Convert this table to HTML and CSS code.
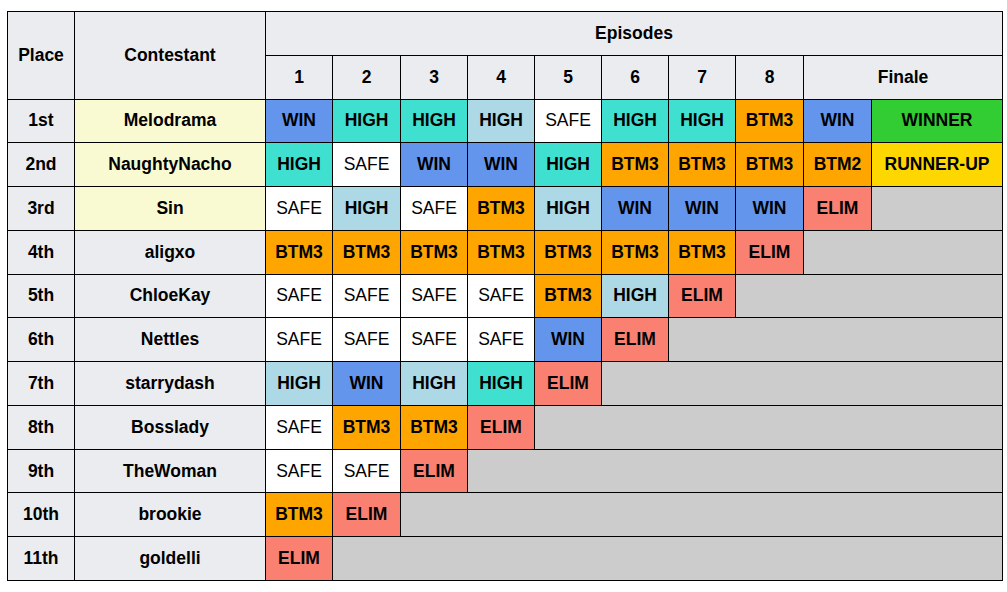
FILE: index.html
```html
<!DOCTYPE html>
<html>
<head>
<meta charset="utf-8">
<link rel="stylesheet" href="styles.css">
</head>
<body>
<div class="table">
  <div class="c hd place">Place</div>
  <div class="c hd name">Contestant</div>
  <div class="c hd episodes">Episodes</div>
  <div class="c hd">1</div><div class="c hd">2</div><div class="c hd">3</div><div class="c hd">4</div>
  <div class="c hd">5</div><div class="c hd">6</div><div class="c hd">7</div><div class="c hd">8</div>
  <div class="c hd finale">Finale</div>

  <div class="c hd">1st</div><div class="c top">Melodrama</div>
  <div class="c win">WIN</div><div class="c high">HIGH</div><div class="c high">HIGH</div><div class="c lhigh">HIGH</div><div class="c safe">SAFE</div><div class="c high">HIGH</div><div class="c high">HIGH</div><div class="c btm">BTM3</div><div class="c win">WIN</div><div class="c winner">WINNER</div>

  <div class="c hd">2nd</div><div class="c top">NaughtyNacho</div>
  <div class="c high">HIGH</div><div class="c safe">SAFE</div><div class="c win">WIN</div><div class="c win">WIN</div><div class="c high">HIGH</div><div class="c btm">BTM3</div><div class="c btm">BTM3</div><div class="c btm">BTM3</div><div class="c btm">BTM2</div><div class="c runner">RUNNER-UP</div>

  <div class="c hd">3rd</div><div class="c top">Sin</div>
  <div class="c safe">SAFE</div><div class="c lhigh">HIGH</div><div class="c safe">SAFE</div><div class="c btm">BTM3</div><div class="c lhigh">HIGH</div><div class="c win">WIN</div><div class="c win">WIN</div><div class="c win">WIN</div><div class="c elim">ELIM</div><div class="c out s1"></div>

  <div class="c hd">4th</div><div class="c hd">aligxo</div>
  <div class="c btm">BTM3</div><div class="c btm">BTM3</div><div class="c btm">BTM3</div><div class="c btm">BTM3</div><div class="c btm">BTM3</div><div class="c btm">BTM3</div><div class="c btm">BTM3</div><div class="c elim">ELIM</div><div class="c out s2"></div>

  <div class="c hd">5th</div><div class="c hd">ChloeKay</div>
  <div class="c safe">SAFE</div><div class="c safe">SAFE</div><div class="c safe">SAFE</div><div class="c safe">SAFE</div><div class="c btm">BTM3</div><div class="c lhigh">HIGH</div><div class="c elim">ELIM</div><div class="c out s3"></div>

  <div class="c hd">6th</div><div class="c hd">Nettles</div>
  <div class="c safe">SAFE</div><div class="c safe">SAFE</div><div class="c safe">SAFE</div><div class="c safe">SAFE</div><div class="c win">WIN</div><div class="c elim">ELIM</div><div class="c out s4"></div>

  <div class="c hd">7th</div><div class="c hd">starrydash</div>
  <div class="c lhigh">HIGH</div><div class="c win">WIN</div><div class="c lhigh">HIGH</div><div class="c high">HIGH</div><div class="c elim">ELIM</div><div class="c out s5"></div>

  <div class="c hd">8th</div><div class="c hd">Bosslady</div>
  <div class="c safe">SAFE</div><div class="c btm">BTM3</div><div class="c btm">BTM3</div><div class="c elim">ELIM</div><div class="c out s6"></div>

  <div class="c hd">9th</div><div class="c hd">TheWoman</div>
  <div class="c safe">SAFE</div><div class="c safe">SAFE</div><div class="c elim">ELIM</div><div class="c out s7"></div>

  <div class="c hd">10th</div><div class="c hd">brookie</div>
  <div class="c btm">BTM3</div><div class="c elim">ELIM</div><div class="c out s8"></div>

  <div class="c hd">11th</div><div class="c hd">goldelli</div>
  <div class="c elim">ELIM</div><div class="c out s9"></div>
</div>
</body>
</html>
```
FILE: styles.css
```css
html, body {
  margin: 0;
  padding: 0;
  background: #ffffff;
}
body {
  padding: 11px 0 0 7px;
  font-family: "Liberation Sans", Arial, sans-serif;
  font-size: 17.5px;
  color: #000;
}
.table {
  display: grid;
  width: 994px;
  height: 568px;
  padding: 1px;
  gap: 1px;
  background: #000;
  grid-template-columns: 66px 190px 66px 67px 66px 66px 66px 66px 66px 67px 67px 130px;
  grid-template-rows: repeat(13, 1fr);
}
.c {
  display: flex;
  align-items: center;
  justify-content: center;
  font-weight: bold;
  background: #fff;
  white-space: nowrap;
}
.hd { background: #eaecf0; }
.place { grid-row: span 2; }
.name { grid-row: span 2; }
.episodes { grid-column: span 10; }
.finale { grid-column: span 2; }
.top { background: #fafad2; }
.win { background: #6495ed; }
.high { background: #40e0d0; }
.lhigh { background: #add8e6; }
.safe { background: #fff; font-weight: normal; }
.btm { background: #ffa500; }
.elim { background: #fa8072; }
.winner { background: #32cd32; }
.runner { background: #ffd700; }
.out { background: #cccccc; }
.s1 { grid-column: span 1; }
.s2 { grid-column: span 2; }
.s3 { grid-column: span 3; }
.s4 { grid-column: span 4; }
.s5 { grid-column: span 5; }
.s6 { grid-column: span 6; }
.s7 { grid-column: span 7; }
.s8 { grid-column: span 8; }
.s9 { grid-column: span 9; }
```
